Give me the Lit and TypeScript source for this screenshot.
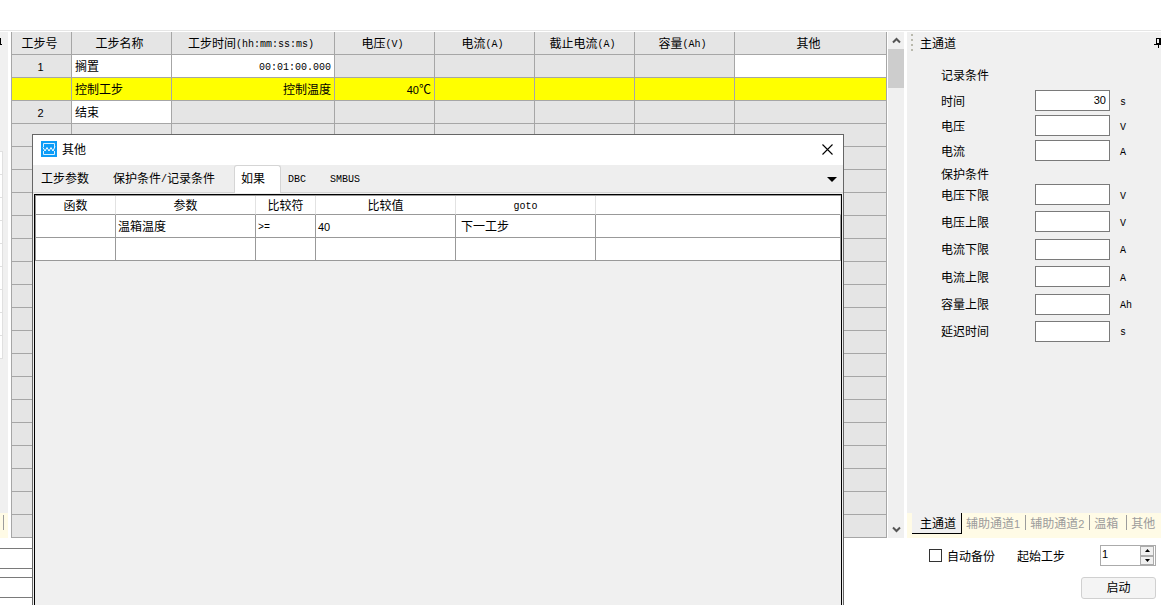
import { LitElement, html, css, svg } from "lit";
import { customElement } from "lit/decorators.js";
import { classMap } from "lit/directives/class-map.js";

/** Splits a string so that half-width characters take exactly half of a full-width one. */
const t = (s: string) =>
  s
    .split(/([\x21-\x7e]+)/)
    .filter((p) => p)
    .map((p) =>
      /^\d+$/.test(p)
        ? html`<span class="num">${p}</span>`
        : /^[\x21-\x7e]+$/.test(p)
          ? html`<span class="lat">${p}</span>`
          : p
    );

const shared = css`
  * {
    box-sizing: border-box;
  }
  .lat {
    font-family: "Liberation Mono", monospace;
    font-size: 10px;
    line-height: 10px;
    vertical-align: 1px;
  }
  .num {
    font-family: "Liberation Sans", sans-serif;
    font-size: 11px;
    line-height: 10px;
  }
  button {
    font: inherit;
    color: inherit;
    background: none;
    border: 0;
    padding: 0;
    margin: 0;
  }
  input {
    font: 11px/14px "Liberation Sans", sans-serif;
    color: #000;
    border-radius: 0;
    margin: 0;
    outline: 0;
  }
  svg {
    display: block;
    flex: none;
  }
  table {
    border-collapse: separate;
    border-spacing: 0;
    table-layout: fixed;
    width: 100%;
  }
  th,
  td {
    font-weight: 400;
    padding: 0 3px;
    overflow: hidden;
    white-space: nowrap;
    line-height: 16px;
  }
`;

const pin = svg`<path d="M2 1.5h5M2.5 1v6M5.5 1v6M6.5 1v6M0 7.5h9M2 6.5h5M4.5 7v4" stroke="#000" fill="none" />`;

type Cell = { text?: string; kind?: "edit" | "mark"; align?: "left" | "right" | "center" };

const STEP_HEADS = ["工步号", "工步名称", "工步时间(hh:mm:ss:ms)", "电压(V)", "电流(A)", "截止电流(A)", "容量(Ah)", "其他"];
const blank: Cell = {};
const mark: Cell = { kind: "mark" };
const STEP_ROWS: Cell[][] = [
  [
    { text: "1", align: "center" },
    { text: "搁置", kind: "edit" },
    { text: "00:01:00.000", kind: "edit", align: "right" },
    blank, blank, blank, blank,
    { kind: "edit" },
  ],
  [
    mark,
    { text: "控制工步", kind: "mark" },
    { text: "控制温度", kind: "mark", align: "right" },
    { text: "40℃", kind: "mark", align: "right" },
    mark, mark, mark, mark,
  ],
  [{ text: "2", align: "center" }, { text: "结束", kind: "edit" }, blank, blank, blank, blank, blank, blank],
  ...Array.from({ length: 18 }, () => Array<Cell>(8).fill(blank)),
];

@customElement("step-table")
export class StepTable extends LitElement {
  static styles = [
    shared,
    css`
      :host {
        display: flex;
        gap: 1px;
        min-width: 0;
      }
      .sheet {
        flex: 1;
        min-width: 0;
        border-left: 1px solid #a6a6a6;
      }
      th,
      td {
        height: 23px;
        background: #e5e5e5;
        border-right: 1px solid #a6a6a6;
        border-bottom: 1px solid #a6a6a6;
      }
      th {
        padding: 0 4px 0 0;
      }
      .c60 { width: 60px; }
      .c100 { width: 100px; }
      .c163 { width: 163px; }
      .edit { background: #fff; }
      .mark { background: #ff0; }
      .right { text-align: right; }
      .center {
        text-align: center;
        padding: 0 5px 0 3px;
      }
      .bar {
        width: 16px;
        display: flex;
        flex-direction: column;
        background: #f0f0f0;
      }
      .arrow {
        height: 17px;
        display: grid;
        place-items: center;
      }
      .track { flex: 1; }
      .thumb {
        height: 39px;
        background: #cdcdcd;
      }
    `,
  ];
  render() {
    return html`
      <div class="sheet">
        <table>
          <colgroup>
            <col class="c60" /><col class="c100" /><col class="c163" /><col class="c100" /><col class="c100" /><col
              class="c100"
            /><col class="c100" /><col />
          </colgroup>
          <thead>
            <tr>${STEP_HEADS.map((h) => html`<th>${t(h)}</th>`)}</tr>
          </thead>
          <tbody>
            ${STEP_ROWS.map(
              (r) => html`<tr>
                ${r.map(
                  (c) =>
                    html`<td
                      class=${classMap({
                        edit: c.kind === "edit",
                        mark: c.kind === "mark",
                        right: c.align === "right",
                        center: c.align === "center",
                      })}
                    >${t(c.text ?? "")}</td>`
                )}
              </tr>`
            )}
          </tbody>
        </table>
      </div>
      <div class="bar">
        <button class="arrow" aria-label="向上滚动">
          <svg width="9" height="7"><path d="M1 5.5L4.5 2L8 5.5" stroke="#555" stroke-width="2" fill="none" /></svg>
        </button>
        <div class="track"><div class="thumb"></div></div>
        <button class="arrow" aria-label="向下滚动">
          <svg width="9" height="7"><path d="M1 1.5L4.5 5L8 1.5" stroke="#555" stroke-width="2" fill="none" /></svg>
        </button>
      </div>
    `;
  }
}

const RECORD = [
  { id: "time", label: "时间", unit: "s", value: "30" },
  { id: "volt", label: "电压", unit: "V", value: "" },
  { id: "curr", label: "电流", unit: "A", value: "" },
];
const PROTECT = [
  { id: "vmin", label: "电压下限", unit: "V", value: "" },
  { id: "vmax", label: "电压上限", unit: "V", value: "" },
  { id: "amin", label: "电流下限", unit: "A", value: "" },
  { id: "amax", label: "电流上限", unit: "A", value: "" },
  { id: "cap", label: "容量上限", unit: "Ah", value: "" },
  { id: "delay", label: "延迟时间", unit: "s", value: "" },
];

@customElement("channel-panel")
export class ChannelPanel extends LitElement {
  static styles = [
    shared,
    css`
      :host {
        display: flex;
        flex-direction: column;
        background: #f0f0f0;
        overflow: hidden;
      }
      .head {
        display: flex;
        align-items: center;
        height: 21px;
        padding-left: 4px;
        gap: 7px;
      }
      .title { flex: 1; }
      .pin { margin-right: -2px; }
      .form {
        flex: 1;
        padding: 14px 0 0 34px;
      }
      .caption {
        height: 16px;
        line-height: 16px;
      }
      .group {
        display: flex;
        flex-direction: column;
        gap: 4px;
        padding: 7px 0 5px;
      }
      .spread {
        gap: 0;
        justify-content: space-between;
        height: 160px;
        padding: 2px 0 0;
      }
      .row {
        display: grid;
        grid-template-columns: 94px 75px auto;
        align-items: center;
        height: 21px;
      }
      .row input {
        height: 21px;
        width: 75px;
        border: 1px solid #7a7a7a;
        padding: 0 3px 2px;
        text-align: right;
        background: #fff;
      }
      .unit {
        padding-left: 10px;
        line-height: 16px;
      }
      .row label {
        line-height: 16px;
      }
      .tabs {
        display: flex;
        height: 25px;
        padding-left: 5px;
        background: #fffbe6;
        color: #9c9c9c;
        white-space: nowrap;
      }
      .tab {
        flex: none;
        min-width: 37px;
        height: 15px;
        line-height: 15px;
        margin-top: 2px;
        padding: 0 5px 0 4px;
        text-align: left;
        border-right: 1px solid #9c9c9c;
      }
      .tab:last-child { border: 0; }
      .on {
        height: 21px;
        line-height: 20px;
        margin: 0;
        padding: 0 5px 2px 8px;
        color: #000;
        background: #f0f0f0;
        border-right: 1px solid #000;
        border-bottom: 1px solid #000;
      }
    `,
  ];
  private rows(list: typeof RECORD) {
    return list.map(
      (f) => html`<div class="row">
        <label for=${f.id}>${f.label}</label>
        <input id=${f.id} type="text" .value=${f.value} />
        <span class="unit">${t(f.unit)}</span>
      </div>`
    );
  }
  render() {
    return html`
      <div class="head">
        <svg width="2" height="18">
          <path d="M0 1h2M0 6h2M0 11h2M0 16h2" stroke="#b9b9ad" stroke-width="2" />
        </svg>
        <span class="title">主通道</span>
        <svg class="pin" width="9" height="12">${pin}</svg>
      </div>
      <div class="form">
        <div class="caption">记录条件</div>
        <div class="group">${this.rows(RECORD)}</div>
        <div class="caption">保护条件</div>
        <div class="group spread">${this.rows(PROTECT)}</div>
      </div>
      <div class="tabs">
        <button class="tab on">主通道</button>
        ${["辅助通道1", "辅助通道2", "温箱", "其他"].map((n) => html`<button class="tab">${t(n)}</button>`)}
      </div>
    `;
  }
}

const COND_HEADS = ["函数", "参数", "比较符", "比较值", "goto", ""];
const COND_ROWS = [
  ["", "温箱温度", ">=", "40", "下一工步", ""],
  ["", "", "", "", "", ""],
];

@customElement("other-dialog")
export class OtherDialog extends LitElement {
  static styles = [
    shared,
    css`
      :host {
        display: flex;
        flex-direction: column;
        background: #f0f0f0;
        border: 1px solid #666;
        border-bottom: 0;
      }
      .bar {
        display: flex;
        align-items: center;
        height: 30px;
        padding: 0 10px 2px 8px;
        gap: 5px;
        background: #fff;
      }
      .title { flex: 1; }
      .tabs {
        display: flex;
        align-items: flex-end;
        height: 28px;
        padding-left: 1px;
        background: #eee;
        border-bottom: 1px solid #d5d5d5;
      }
      .tab {
        height: 27px;
        line-height: 16px;
        padding: 0 17px 1px 7px;
      }
      .on {
        height: 28px;
        margin: 0 0 -1px 2px;
        padding: 0 15px 4px 6px;
        background: #fff;
        border: 1px solid #d5d5d5;
        border-bottom: 0;
        border-radius: 3px 3px 0 0;
      }
      .more {
        margin: 0 6px 10px auto;
      }
      .view {
        flex: 1;
        margin: 1px 1px 0;
        border: 1px solid #000;
        border-bottom: 0;
      }
      table {
        border-left: 1px solid #999;
        border-top: 1px solid #999;
      }
      th,
      td {
        background: #fff;
        border-right: 1px solid #999;
        border-bottom: 1px solid #999;
        height: 23px;
        text-align: left;
        padding: 0 2px;
      }
      th {
        height: 19px;
        border-right-color: #e2e2e2;
        text-align: center;
      }
      td:nth-child(5) { padding-left: 5px; }
      .c80 { width: 80px; }
      .c140 { width: 140px; }
      .c60 { width: 60px; }
    `,
  ];
  render() {
    return html`
      <div class="bar">
        <svg width="16" height="16" fill="none">
          <rect width="16" height="16" fill="#0c9cf7" />
          <path d="M2.5 6V2.5h11V6M2.5 10v3.5h11V10" stroke="#d8f0ff" />
          <path d="M2 6.5L4 10L6 6.5L8 10L10 6.5L12 10L14 5.5" stroke="#fff" />
        </svg>
        <span class="title">其他</span>
        <button aria-label="关闭">
          <svg width="11" height="11"><path d="M.5.5l10 10M10.5.5l-10 10" stroke="#000" stroke-width="1.1" /></svg>
        </button>
      </div>
      <div class="tabs">
        ${["工步参数", "保护条件/记录条件", "如果", "DBC", "SMBUS"].map(
          (n) => html`<button class=${classMap({ tab: true, on: n === "如果" })}>${t(n)}</button>`
        )}
        <button class="more" aria-label="更多">
          <svg width="10" height="5"><path d="M0 0h10L5 5z" /></svg>
        </button>
      </div>
      <div class="view">
        <table>
          <colgroup>
            <col class="c80" /><col class="c140" /><col class="c60" /><col class="c140" /><col class="c140" /><col />
          </colgroup>
          <thead>
            <tr>${COND_HEADS.map((h) => html`<th>${t(h)}</th>`)}</tr>
          </thead>
          <tbody>
            ${COND_ROWS.map((r) => html`<tr>${r.map((c) => html`<td>${t(c)}</td>`)}</tr>`)}
          </tbody>
        </table>
      </div>
    `;
  }
}

@customElement("app-root")
export class AppRoot extends LitElement {
  static styles = [
    shared,
    css`
      :host {
        display: block;
        position: relative;
        min-height: 100vh;
        overflow: hidden;
        background: #fff;
        color: #000;
        font: 12px/16px "Noto Sans CJK SC", sans-serif;
      }
      .top {
        height: 31px;
        border-bottom: 1px solid #e5e5e5;
        margin-bottom: 1px;
      }
      .work {
        display: grid;
        grid-template-columns: 8px minmax(0, 1fr) 254px;
        column-gap: 3px;
      }
      .side {
        display: flex;
        flex-direction: column;
        background: #f0f0f0;
        overflow: hidden;
      }
      .sidehead {
        height: 119px;
        padding-top: 5px;
      }
      .sidehead svg { margin-left: -6px; }
      .list {
        width: 3px;
        border: 1px solid #e0e0e0;
        border-width: 1px 1px 0 0;
        background: #fff;
      }
      .item {
        height: 23px;
        border-bottom: 1px solid #e0e0e0;
      }
      .sidetabs {
        height: 25px;
        margin-top: auto;
        padding: 2px 0 0 3px;
        background: #fffbe6;
      }
      .sep {
        width: 1px;
        height: 15px;
        background: #9c9c9c;
      }
      .foot {
        display: flex;
        justify-content: space-between;
        align-items: flex-start;
      }
      .fields {
        flex: 0 1 400px;
        display: flex;
        flex-direction: column;
        gap: 8px;
        padding-top: 10px;
      }
      .fields input {
        height: 21px;
        width: 100%;
        border: 1px solid #7a7a7a;
        border-left: 0;
      }
      .actions {
        display: flex;
        flex-direction: column;
        align-items: flex-end;
        gap: 11px;
        padding: 7px 5px 0 0;
      }
      .line {
        display: flex;
        align-items: center;
      }
      .check {
        display: flex;
        align-items: center;
        gap: 5px;
        margin-right: 22px;
      }
      .check input {
        appearance: none;
        width: 13px;
        height: 13px;
        border: 1px solid #333;
        background: #fff;
      }
      .check input:checked { background: #333; }
      .steplabel { margin-right: 35px; }
      .spin {
        display: flex;
        width: 56px;
        height: 21px;
        border: 1px solid #ababab;
        padding-right: 1px;
      }
      .spin input {
        flex: 1;
        min-width: 0;
        border: 0;
        padding: 0 1px 3px;
        appearance: textfield;
      }
      .spin input::-webkit-inner-spin-button { appearance: none; }
      .steps {
        display: grid;
        grid-template-rows: 1fr 1fr;
        width: 14px;
      }
      .steps button {
        display: grid;
        place-items: center;
        background: #f0f0f0;
        border: 1px solid #acacac;
      }
      .start {
        width: 75px;
        height: 22px;
        padding-bottom: 2px;
        background: #f4f4f4;
        border: 1px solid #d0d0d0;
        border-radius: 3px;
      }
      other-dialog {
        position: absolute;
        top: 134px;
        left: 32px;
        right: 317px;
        bottom: 0;
      }
    `,
  ];
  render() {
    return html`
      <header class="top"></header>
      <main class="work">
        <div class="side">
          <div class="sidehead"><svg width="8" height="12">${pin}</svg></div>
          <div class="list">${Array.from({ length: 9 }, () => html`<div class="item"></div>`)}</div>
          <div class="sidetabs"><div class="sep"></div></div>
        </div>
        <step-table></step-table>
        <channel-panel></channel-panel>
      </main>
      <footer class="foot">
        <div class="fields">
          <input type="text" aria-label="名称" />
          <input type="text" aria-label="备注" />
        </div>
        <div class="actions">
          <div class="line">
            <label class="check"><input type="checkbox" />自动备份</label>
            <label class="steplabel" for="first">起始工步</label>
            <div class="spin">
              <input id="first" type="number" value="1" min="1" />
              <div class="steps">
                <button aria-label="增加"><svg width="5" height="3"><path d="M0 3h5L2.5 0z" /></svg></button>
                <button aria-label="减少"><svg width="5" height="3"><path d="M0 0h5L2.5 3z" /></svg></button>
              </div>
            </div>
          </div>
          <button class="start">启动</button>
        </div>
      </footer>
      <other-dialog></other-dialog>
    `;
  }
}
